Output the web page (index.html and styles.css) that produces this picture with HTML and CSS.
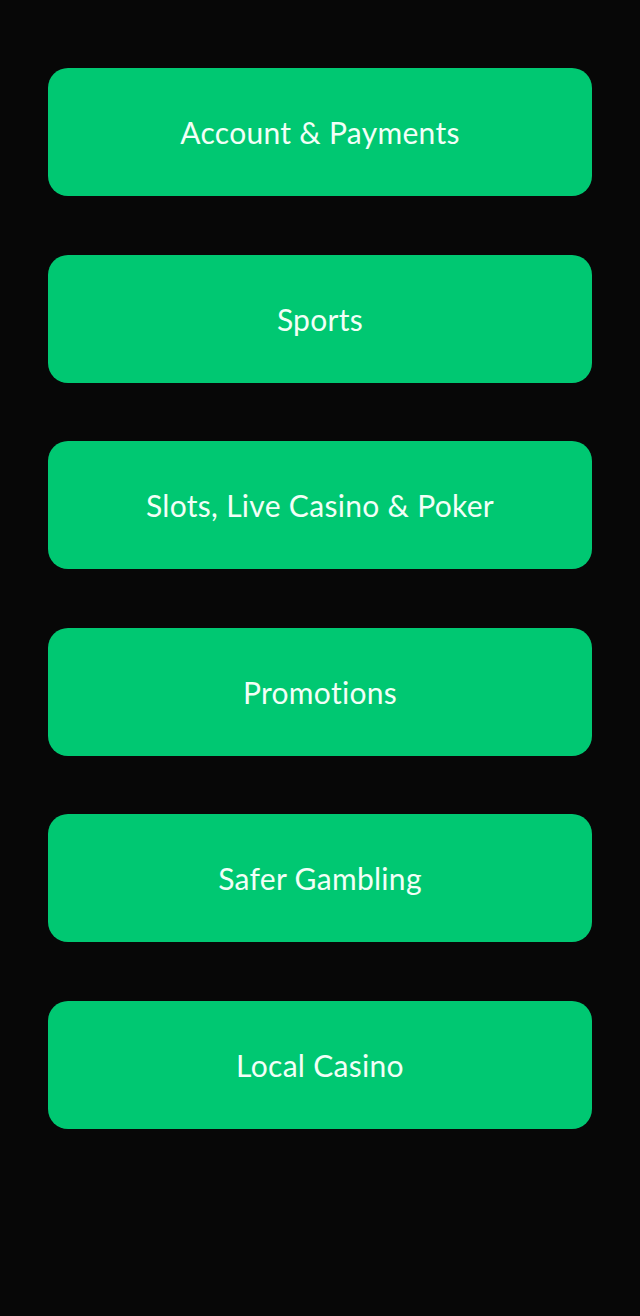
FILE: index.html
```html
<!DOCTYPE html>
<html lang="en">
<head>
  <meta charset="UTF-8" />
  <meta name="viewport" content="width=device-width, initial-scale=1.0"/>
  <title>Help Centre</title>
  <link rel="stylesheet" href="styles.css">
</head>
<body>
  <nav class="topics">
    <a class="topic" href="#">Account &amp; Payments</a>
    <a class="topic" href="#">Sports</a>
    <a class="topic" href="#">Slots, Live Casino &amp; Poker</a>
    <a class="topic" href="#">Promotions</a>
    <a class="topic" href="#">Safer Gambling</a>
    <a class="topic" href="#">Local Casino</a>
  </nav>
</body>
</html>
```

FILE: styles.css
```css
body { margin: 0; background: #070707; font-family: Lato, "Open Sans", Arial, sans-serif; min-height: 1316px; }
.topics { display: flex; flex-direction: column; gap: 58.6px; padding: 68px 48px 0; }
.topic { display: flex; align-items: center; justify-content: center; height: 128px; background: #00c872; border-radius: 20px; color: #f2fff7; font-size: 30px; text-decoration: none; letter-spacing: 0.3px; }
```
